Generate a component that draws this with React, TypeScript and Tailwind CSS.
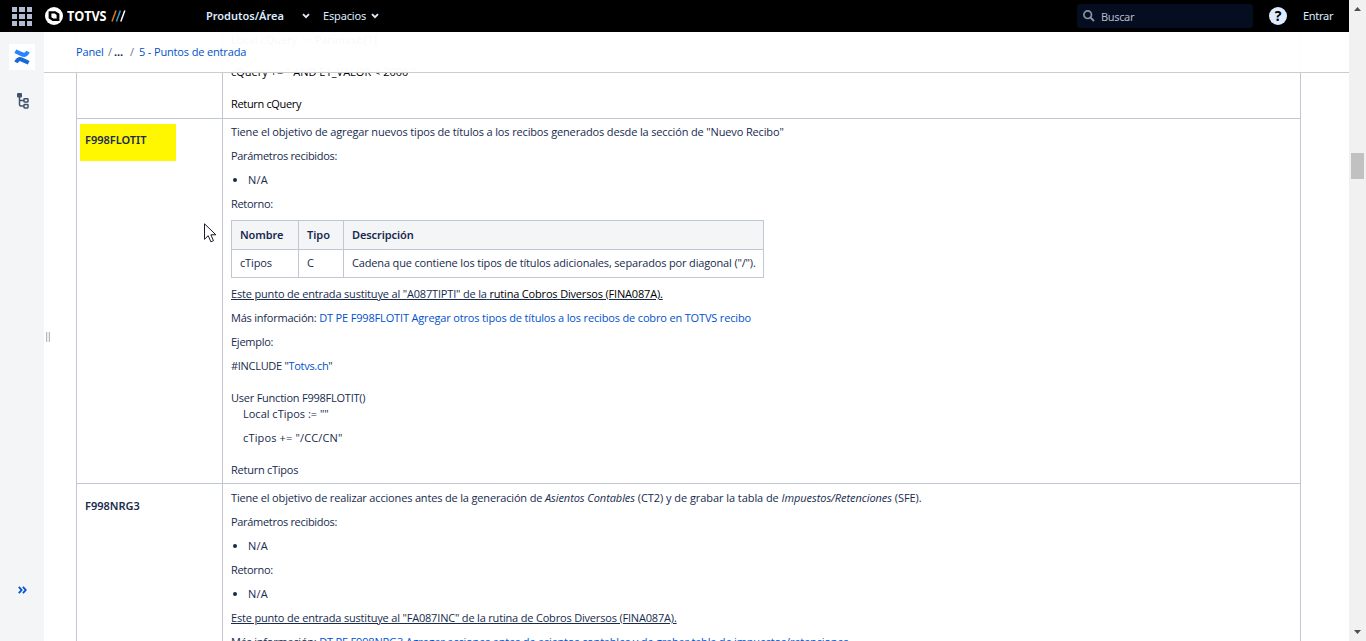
import clsx from "clsx";
import { ReactNode } from "react";

const Line = ({
  children,
  className,
}: {
  children: ReactNode;
  className?: string;
}) => (
  <p className={clsx("h-4 whitespace-pre leading-4", className)}>{children}</p>
);

const Bullet = ({ children }: { children: ReactNode }) => (
  <div className="flex h-4 items-center leading-4">
    <span className="ml-[2px] mr-[11px] h-1 w-1 rounded-full bg-[#172b4d]" />
    <span className="tracking-[0.25px]">{children}</span>
  </div>
);

const Chevron = ({ className }: { className?: string }) => (
  <svg viewBox="0 0 8 6" className={clsx("h-[6px] w-2", className)}>
    <path
      d="M1 1.2 4 4.2 7 1.2"
      fill="none"
      stroke="#deebff"
      strokeWidth="1.9"
    />
  </svg>
);

const TopBar = () => (
  <header className="flex h-8 shrink-0 items-center bg-black font-['Noto_Sans',sans-serif] text-[11px] text-[#deebff]">
    <div className="ml-3 grid w-5 grid-cols-3 gap-[2px]">
      {Array.from({ length: 9 }).map((_, i) => (
        <span key={i} className="h-[5px] bg-[#b3bcd3]" />
      ))}
    </div>
    <div className="ml-[13px] flex w-[161px] items-center">
      <svg viewBox="0 0 18 18" className="h-[18px] w-[18px]" fill="none">
        <circle cx="9" cy="9" r="9" fill="#fff" />
        <path d="M3.6 4.200V11.200L7.600 14H14.400V6.800L10.400 4.200Z" fill="#000" />
        <path d="M6.400 6.600H9.800L11.600 8V11.600H8.200L6.400 10.200Z" fill="#fff" />
      </svg>
      <span className="ml-[4px] w-[44px] origin-left scale-x-[0.87] font-['Open_Sans',sans-serif] text-[14.5px] font-bold leading-none tracking-[-0.1px] text-white">
        TOTVS
      </span>
      <svg
        viewBox="0 0 15 12"
        className="h-3 w-[15px]"
        fill="none"
        strokeWidth="1.5"
      >
        <path d="M1 11.5 5 .5" stroke="#e07a1f" />
        <path d="M5.400 11.500 9.400 .5" stroke="#2a9fd0" />
        <path d="M9.800 11.500 13.800 .5" stroke="#fff" />
      </svg>
    </div>
    <span className="w-[96px] font-semibold">Produtos/Área</span>
    <Chevron />
    <span className="ml-[13px] w-[48px] tracking-[-0.15px]">Espacios</span>
    <Chevron />
    <div className="ml-auto flex h-6 w-[176px] items-center rounded-[3px] bg-[#050e20] text-[#b3bac5]">
      <svg viewBox="0 0 12 12" className="ml-[6px] h-3 w-3">
        <circle
          cx="4.7"
          cy="4.7"
          r="3.8"
          fill="none"
          stroke="#8993a4"
          strokeWidth="1.7"
        />
        <path d="M7.6 7.6 11 11" stroke="#8993a4" strokeWidth="2" />
      </svg>
      <span className="ml-[6px] mt-[2px] tracking-[-0.35px]">Buscar</span>
    </div>
    <span className="ml-4 flex h-[18px] w-[18px] items-center justify-center rounded-full bg-[#deebff] text-[14px] font-bold leading-none text-black">
      ?
    </span>
    <span className="ml-[16px] w-[46px] tracking-[-0.3px]">Entrar</span>
  </header>
);

const SideBar = () => (
  <aside className="flex w-11 shrink-0 flex-col items-center bg-[#f4f5f7]">
    <div className="mt-3 flex h-[26px] w-[26px] items-center justify-center bg-white">
      <svg viewBox="0 0 16 16" className="h-4 w-4">
        <path
          d="M.9 11.6C2.9 8.2 5.4 7.2 9.3 9l6.3 2.900-1.800 3.700-6.400-2.900C5.6 12 4.900 12.300 3.800 14.200L.3 12.500Z"
          fill="#1868db"
        />
        <path
          d="M15.100 4.400C13.100 7.800 10.600 8.800 6.700 7L.4 4.100 2.200.4l6.400 2.900c1.800.7 2.500.4 3.600-1.500l3.500 1.700Z"
          fill="#2684ff"
        />
      </svg>
    </div>
    <svg viewBox="0 0 12 16" className="ml-[2px] mt-[23px] h-4 w-3" fill="none">
      <rect x="0" y="0" width="5" height="4.500" rx="1" fill="#42526e" />
      <path
        d="M2.500 4v7.500q0 1.500 1.500 1.500h3M2.500 7.500H7"
        stroke="#42526e"
        strokeWidth="1.500"
      />
      <rect x="7" y="5.700" width="4" height="3.400" rx=".6" stroke="#42526e" strokeWidth="1.500" />
      <rect x="7" y="11.500" width="4" height="3.400" rx=".6" stroke="#42526e" strokeWidth="1.500" />
    </svg>
    <svg viewBox="0 0 9 8" className="mb-[47px] mt-auto h-2 w-[9px]">
      <path
        d="M.8.900 3.600 4 .8 7.100M4.900.900 7.700 4 4.900 7.100"
        fill="none"
        stroke="#0052cc"
        strokeWidth="1.800"
      />
    </svg>
  </aside>
);

const ScrollBar = () => (
  <div className="flex w-[17px] shrink-0 flex-col items-center bg-[#f1f1f1]">
    <svg viewBox="0 0 7 4" className="mt-[7px] h-1 w-[7px]">
      <path d="M0 4 3.500 0 7 4Z" fill="#505050" />
    </svg>
    <div className="mt-[142px] h-[26px] w-[13px] bg-[#c1c1c1]" />
    <svg viewBox="0 0 7 4" className="mb-[7px] mt-auto h-1 w-[7px]">
      <path d="M0 0H7L3.500 4Z" fill="#505050" />
    </svg>
  </div>
);

const Breadcrumbs = () => (
  <nav className="absolute inset-x-0 top-0 flex h-[41px] items-center border-b border-[#cccccc] bg-white/[0.97] pl-8 text-[11px] tracking-[-0.15px] text-[#0052cc]">
    <span className="w-[27px]">Panel</span>
    <span className="ml-[5px] w-[6px] text-[#6b778c]">/</span>
    <span className="w-[11px] font-bold text-[#172b4d]">...</span>
    <span className="ml-[5px] w-[9px] text-[#6b778c]">/</span>
    <span>5 - Puntos de entrada</span>
  </nav>
);

const ReturnTable = () => (
  <table className="w-[533px] table-fixed border-collapse text-left">
    <thead>
      <tr className="h-[29px] bg-[#f4f5f7] font-['Noto_Sans',sans-serif]">
        <th className="w-[67px] border border-[#c1c7d0] px-2 py-0 font-semibold tracking-[-0.1px]">
          Nombre
        </th>
        <th className="w-[45px] border border-[#c1c7d0] px-2 py-0 font-semibold">
          Tipo
        </th>
        <th className="border border-[#c1c7d0] px-2 py-0 font-semibold tracking-[-0.1px]">
          Descripción
        </th>
      </tr>
    </thead>
    <tbody>
      <tr className="h-[28px] tracking-[-0.157px]">
        <td className="border border-[#c1c7d0] px-2 py-0">cTipos</td>
        <td className="border border-[#c1c7d0] px-2 py-0">C</td>
        <td className="whitespace-nowrap border border-[#c1c7d0] px-2 py-0">
          Cadena que contiene los tipos de títulos adicionales, separados por
          diagonal ("/").
        </td>
      </tr>
    </tbody>
  </table>
);

const App = () => {
  return (
    <div className="flex h-[641px] w-[1366px] overflow-hidden bg-white font-['Open_Sans',sans-serif] text-[11px] text-[#172b4d]">
      <div className="flex min-w-0 flex-1 flex-col">
        <TopBar />
        <div className="flex min-h-0 flex-1">
          <SideBar />
          <main className="relative min-w-0 flex-1 overflow-hidden">
            <div className="ml-8 grid w-[1225px] grid-cols-[146px_1fr] border-x border-[#c1c7d0]">
              <div className="h-[87px] border-b border-r border-[#c1c7d0]" />
              <div className="h-[87px] border-b border-[#c1c7d0] pl-2 text-black">
                <Line>Local cQuery  := Paramixb[1]</Line>
                <Line className="mt-4">{'cQuery += " AND E1_VALOR < 2000 "'}</Line>
                <Line className="mt-4 tracking-[-0.33px]">Return cQuery</Line>
              </div>

              <div className="h-[365px] border-b border-r border-[#c1c7d0] pl-[3px] pt-[5px]">
                <div className="h-[37px] w-[96px] bg-[#fff700] pl-[5px] pt-2 font-['Noto_Sans',sans-serif] font-semibold">
                  <Line>F998FLOTIT</Line>
                </div>
              </div>
              <div className="flex h-[365px] flex-col gap-2 border-b border-[#c1c7d0] pl-2 pt-[5px]">
                <Line className="tracking-[-0.144px]">
                  Tiene el objetivo de agregar nuevos tipos de títulos a los recibos
                  generados desde la sección de "Nuevo Recibo"
                </Line>
                <Line className="tracking-[-0.31px]">Parámetros recibidos:</Line>
                <Bullet>N/A</Bullet>
                <Line className="tracking-[-0.3px]">Retorno:</Line>
                <ReturnTable />
                <Line className="tracking-[-0.173px] underline">
                  Este punto de entrada sustituye al "A087TIPTI" de la{" "}
                  <span className="text-black">
                    rutina Cobros Diversos (FINA087A).
                  </span>
                </Line>
                <Line className="tracking-[-0.22px]">
                  Más información:{" "}
                  <span className="tracking-[-0.16px] text-[#0052cc]">
                    DT PE F998FLOTIT Agregar otros tipos de títulos a los recibos de
                    cobro en TOTVS recibo
                  </span>
                </Line>
                <Line className="tracking-[-0.25px]">Ejemplo:</Line>
                <Line className="tracking-[-0.3px]">
                  #INCLUDE "<span className="text-[#0052cc]">Totvs.ch</span>"
                </Line>
                <div className="mt-2">
                  <Line className="tracking-[-0.23px]">
                    User Function F998FLOTIT()
                  </Line>
                  <Line className="pl-3">Local cTipos := ""</Line>
                </div>
                <Line className="pl-3 tracking-[0.15px]">cTipos += "/CC/CN"</Line>
                <Line className="mt-2 tracking-[-0.25px]">Return cTipos</Line>
              </div>

              <div className="h-[200px] border-r border-[#c1c7d0] pl-2 pt-[14px] font-['Noto_Sans',sans-serif] font-semibold">
                <Line>F998NRG3</Line>
              </div>
              <div className="flex h-[200px] flex-col gap-2 pl-2 pt-[6px]">
                <Line className="tracking-[-0.06px]">
                  <span className="tracking-[-0.165px]">
                    Tiene el objetivo de realizar acciones antes de la generación de{" "}
                  </span>
                  <i>Asientos Contables</i> (CT2) y de grabar la tabla de{" "}
                  <i>Impuestos/Retenciones</i> (SFE).
                </Line>
                <Line className="tracking-[-0.31px]">Parámetros recibidos:</Line>
                <Bullet>N/A</Bullet>
                <Line className="tracking-[-0.3px]">Retorno:</Line>
                <Bullet>N/A</Bullet>
                <Line className="tracking-[-0.18px] underline">
                  Este punto de entrada sustituye al "FA087INC" de la rutina de Cobros
                  Diversos (FINA087A).
                </Line>
                <Line className="tracking-[-0.22px]">
                  Más información:{" "}
                  <span className="tracking-[-0.18px] text-[#0052cc]">
                    DT PE F998NRG3 Agregar acciones antes de asientos contables y de
                    grabar tabla de impuestos/retenciones
                  </span>
                </Line>
              </div>
            </div>

            <Breadcrumbs />

            {/* sidebar resize handle */}
            <div className="absolute left-[2px] top-[300px] h-[10px] w-1 border-x border-[#b3bac5] bg-[#ebecf0]" />

            <svg
              viewBox="0 0 13 20"
              className="absolute left-[160px] top-[191px] h-5 w-[13px]"
            >
              <path
                d="M.5.800V16.300L4.200 12.700 6.900 18.800 9.500 17.700 6.900 11.800H11.900Z"
                fill="#fff"
                stroke="#1a1a2a"
              />
            </svg>
          </main>
        </div>
      </div>
      <ScrollBar />
    </div>
  );
};

export default App;
